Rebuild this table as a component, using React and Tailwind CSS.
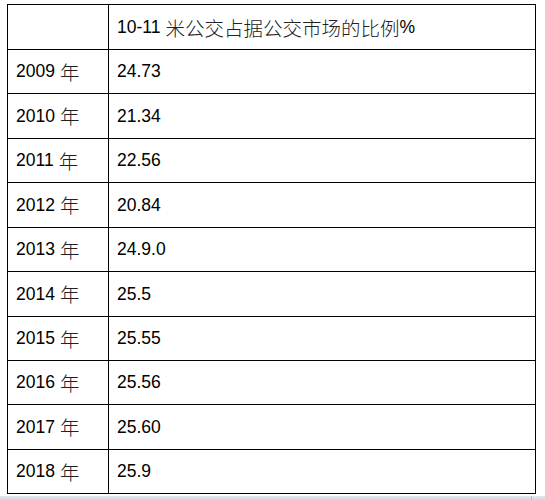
import React from 'react';

const rows = [
  { year: '2009', value: '24.73', h: 'h-[44px]' },
  { year: '2010', value: '21.34', h: 'h-[45px]' },
  { year: '2011', value: '22.56', h: 'h-[44px]' },
  { year: '2012', value: '20.84', h: 'h-[45px]' },
  { year: '2013', value: '24.9.0', h: 'h-[44px]' },
  { year: '2014', value: '25.5', h: 'h-[45px]' },
  { year: '2015', value: '25.55', h: 'h-[44px]' },
  { year: '2016', value: '25.56', h: 'h-[44px]' },
  { year: '2017', value: '25.60', h: 'h-[45px]' },
  { year: '2018', value: '25.9', h: 'h-[44px]' }
];

const cjk = "text-[19.5px] font-['Noto_Sans_CJK_SC',sans-serif] font-light text-[#222]";

const App = () => {
  return (
    <div className="w-[545px] h-[500px] bg-white flex flex-col font-['Liberation_Sans',sans-serif] text-[17.5px] text-black overflow-hidden">
      <div className="pt-[4px] pl-[7px]">
        <div className="w-[529px] border-l border-t border-black grid grid-cols-[101px_427px]">
          <div className="h-[45px] border-r border-b border-black" />
          <div className="h-[45px] border-r border-b border-black flex items-center pl-[8px] pt-[1px]">
            <span>10-11</span>
            <span className={`${cjk} ml-[5px]`}>米公交占据公交市场的比例</span>
            <span>%</span>
          </div>
          {rows.map(r => (
            <React.Fragment key={r.year}>
              <div className={`${r.h} border-r border-b border-black flex items-center pl-[8px]`}>
                <span>{r.year}</span>
                <span className={`${cjk} ml-[5px]`}>年</span>
              </div>
              <div className={`${r.h} border-r border-b border-black flex items-center pl-[8px]`}>
                {r.value}
              </div>
            </React.Fragment>
          ))}
        </div>
      </div>
      <div className="mt-auto h-[4px] bg-gradient-to-b from-[#e4e7eb] to-[#d3d7dd] flex justify-end">
        <div className="w-px h-full bg-[#b8bcc2] mr-[13px]" />
      </div>
    </div>
  );
};

export default App;
